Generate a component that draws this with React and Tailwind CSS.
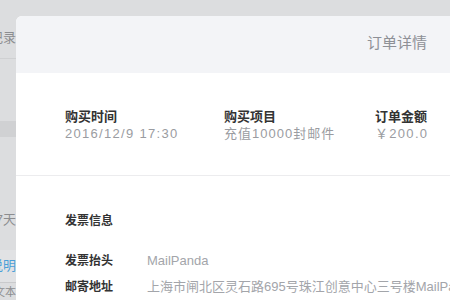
export default function App() {
  const font = { fontFamily: '"Liberation Sans", "Noto Sans CJK SC", sans-serif' };
  return (
    <div className="relative w-[450px] h-[300px] overflow-hidden bg-[#dcdddf]" style={font}>
      {/* background page (dimmed) */}
      <div className="flex flex-col w-[16px] h-full overflow-hidden text-[13px] text-[#8c8d90]">
        <div className="h-[59px] flex items-start justify-end whitespace-nowrap pt-[29px] border-b border-[#cfd0d2] leading-[17px]">
          <span>购买记录</span>
        </div>
        <div className="h-[62px]"></div>
        <div className="h-[16px] bg-[#d0d1d3]"></div>
        <div className="h-[72px]"></div>
        <div className="h-[22px] flex items-center justify-end whitespace-nowrap">
          <span>最近7天</span>
        </div>
        <div className="h-[19px]"></div>
        <div className="h-[33px] bg-[#e1e2e4] flex items-start justify-end whitespace-nowrap border-b border-[#c9cacc] text-[#4a9fd8]">
          <span className="mt-[6px]">说明</span>
        </div>
        <div className="h-[17px] flex items-end justify-end whitespace-nowrap text-[11px]">
          <span>文本</span>
        </div>
      </div>

      {/* modal */}
      <div className="absolute left-[16px] top-[16px] w-[470px] h-[320px] rounded-tl-[6px] bg-white overflow-hidden">
        <div className="h-[57px] bg-[#f3f4f7] flex items-center justify-end pr-[59px] pb-[3px]">
          <span className="text-[15px] text-[#8e9096]">订单详情</span>
        </div>
        <div className="h-[103px] border-b border-[#ececee] flex pl-[49px] pt-[35px]">
          <div className="w-[159px] flex flex-col">
            <span className="text-[13px] font-bold text-[#333] leading-[17px]">购买时间</span>
            <span className="text-[13px] text-[#9a9ca1] tracking-[1.3px] leading-[17px]">2016/12/9 17:30</span>
          </div>
          <div className="w-[151px] flex flex-col">
            <span className="text-[13px] font-bold text-[#333] leading-[17px]">购买项目</span>
            <span className="text-[13px] text-[#9a9ca1] tracking-[1px] leading-[17px]">充值10000封邮件</span>
          </div>
          <div className="flex flex-col">
            <span className="text-[13px] font-bold text-[#333] leading-[17px]">订单金额</span>
            <span className="text-[13px] text-[#9a9ca1] tracking-[1.3px] leading-[17px]">￥200.0</span>
          </div>
        </div>
        <div className="flex flex-col pl-[49px] pt-[37px]">
          <span className="text-[12px] font-bold text-[#333] leading-[16px]">发票信息</span>
          <div className="flex items-center mt-[22px] h-[20px]">
            <span className="w-[82px] text-[12px] font-bold text-[#333]">发票抬头</span>
            <span className="text-[13px] text-[#a3a5aa]">MailPanda</span>
          </div>
          <div className="flex items-center mt-[6px] h-[20px] whitespace-nowrap">
            <span className="w-[82px] shrink-0 text-[12px] font-bold text-[#333]">邮寄地址</span>
            <span className="text-[13px] text-[#a3a5aa]">上海市闸北区灵石路695号珠江创意中心三号楼MailPanda</span>
          </div>
        </div>
      </div>
    </div>
  );
}
